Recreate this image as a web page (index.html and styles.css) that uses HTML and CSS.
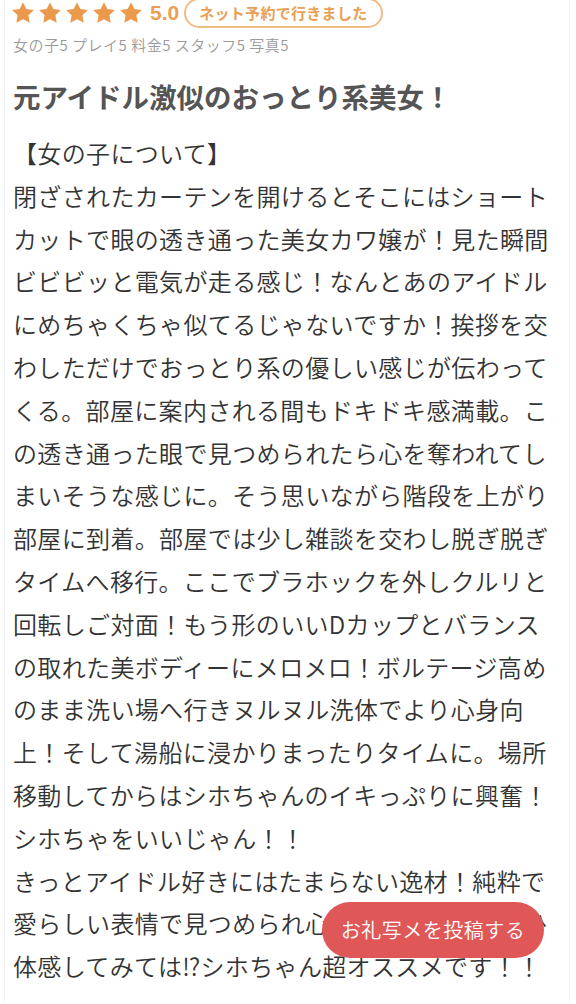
FILE: index.html
```html
<!DOCTYPE html>
<html lang="ja">
<head>
<meta charset="utf-8">
<title>口コミ</title>
<link rel="stylesheet" href="styles.css">
</head>
<body>
<div class="card">
  <div class="head">
    <div class="stars">
      <svg viewBox="0 0 24 24"><path d="M12 2l3.09 6.26L22 9.27l-5 4.87 1.18 6.88L12 17.77l-6.18 3.25L7 14.14 2 9.27l6.91-1.01z"/></svg>
      <svg viewBox="0 0 24 24"><path d="M12 2l3.09 6.26L22 9.27l-5 4.87 1.18 6.88L12 17.77l-6.18 3.25L7 14.14 2 9.27l6.91-1.01z"/></svg>
      <svg viewBox="0 0 24 24"><path d="M12 2l3.09 6.26L22 9.27l-5 4.87 1.18 6.88L12 17.77l-6.18 3.25L7 14.14 2 9.27l6.91-1.01z"/></svg>
      <svg viewBox="0 0 24 24"><path d="M12 2l3.09 6.26L22 9.27l-5 4.87 1.18 6.88L12 17.77l-6.18 3.25L7 14.14 2 9.27l6.91-1.01z"/></svg>
      <svg viewBox="0 0 24 24"><path d="M12 2l3.09 6.26L22 9.27l-5 4.87 1.18 6.88L12 17.77l-6.18 3.25L7 14.14 2 9.27l6.91-1.01z"/></svg>
    </div>
    <span class="score">5.0</span>
    <span class="pill">ネット予約で行きました</span>
  </div>
  <p class="ratings">女の子5 プレイ5 料金5 スタッフ5 写真5</p>
  <h1 class="title">元アイドル激似のおっとり系美女！</h1>
  <p class="body">【女の子について】<br>閉ざされたカーテンを開けるとそこにはショート<br>カットで眼の透き通った美女カワ嬢が！見た瞬間<br>ビビビッと電気が走る感じ！なんとあのアイドル<br>にめちゃくちゃ似てるじゃないですか！挨拶を交<br>わしただけでおっとり系の優しい感じが伝わって<br>くる。部屋に案内される間もドキドキ感満載。こ<br>の透き通った眼で見つめられたら心を奪われてし<br>まいそうな感じに。そう思いながら階段を上がり<br>部屋に到着。部屋では少し雑談を交わし脱ぎ脱ぎ<br>タイムへ移行。ここでブラホックを外しクルリと<br>回転しご対面！もう形のいいDカップとバランス<br>の取れた美ボディーにメロメロ！ボルテージ高め<br>のまま洗い場へ行きヌルヌル洗体でより心身向<br>上！そして湯船に浸かりまったりタイムに。場所<br>移動してからはシホちゃんのイキっぷりに興奮！<br>シホちゃをいいじゃん！！<br>きっとアイドル好きにはたまらない逸材！純粋で<br>愛らしい表情で見つめられ心が奪われます！ぜひ<br>体感してみては⁉シホちゃん超オススメです！！</p>
</div>
<a class="post-btn" href="#">お礼写メを投稿する</a>
</body>
</html>
```

FILE: styles.css
```css
html, body {
  margin: 0;
  padding: 0;
  background: #fff;
}
body {
  font-family: "Noto Sans CJK JP", "Noto Sans", sans-serif;
  overflow: hidden;
  height: 1004px;
}
.card {
  margin: 0 6px 0 4px;
  padding: 0 0 0 8px;
  border-left: 1px solid #f2f2f2;
  border-right: 1px solid #f2f2f2;
  min-height: 1004px;
  box-sizing: border-box;
}
.head {
  display: flex;
  align-items: center;
  height: 30px;
  margin-top: -2px;
}
.stars {
  display: flex;
  gap: 1px;
  margin-left: -3px;
}
.stars svg {
  width: 26px;
  height: 26px;
  fill: #eb9a4c;
}
.score {
  font-family: "Liberation Sans", Arial, sans-serif;
  font-size: 21px;
  font-weight: 700;
  color: #ea9f56;
  margin-left: 6px;
}
.pill {
  margin-left: 5px;
  height: 26px;
  padding: 0 13px;
  border: 2px solid #f1bd86;
  border-radius: 16px;
  color: #e8a056;
  font-size: 15px;
  font-weight: 700;
  line-height: 26px;
  letter-spacing: 0.3px;
}
.ratings {
  margin: 7px 0 0;
  font-size: 15px;
  line-height: 20px;
  color: #9a9a9a;
  letter-spacing: 0.5px;
  font-weight: 350;
}
.title {
  margin: 23px 0 0;
  font-size: 27.5px;
  line-height: 36px;
  font-weight: 700;
  color: #555;
}
.body {
  margin: 18px 0 0;
  font-size: 24px;
  line-height: 42.8px;
  color: #333;
  font-weight: 350;
  white-space: nowrap;
  letter-spacing: 0.35px;
}
.post-btn {
  position: fixed;
  right: 32px;
  bottom: 46px;
  width: 222px;
  height: 56px;
  border-radius: 28px;
  background: #e05757;
  color: #fff;
  font-size: 20px;
  font-weight: 350;
  line-height: 56px;
  text-align: center;
  text-decoration: none;
  letter-spacing: 0.5px;
}
```
